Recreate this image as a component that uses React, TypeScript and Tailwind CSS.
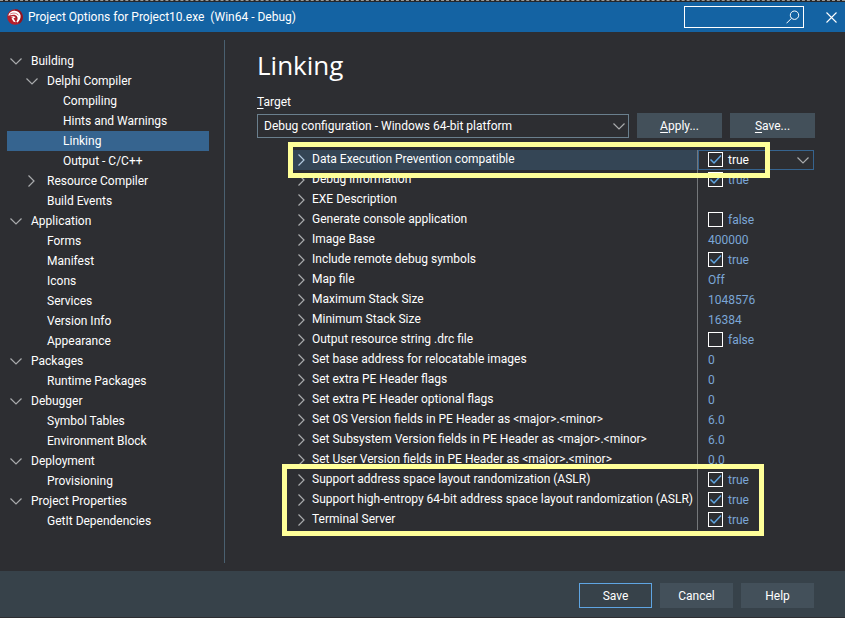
import { useState } from 'react';

type TreeItem = {
  label: string;
  level: 0 | 1 | 2;
  state?: 'open' | 'closed';
};

type Option = {
  name: string;
  value?: string | boolean;
};

const tree: TreeItem[] = [
  { label: 'Building', level: 0, state: 'open' },
  { label: 'Delphi Compiler', level: 1, state: 'open' },
  { label: 'Compiling', level: 2 },
  { label: 'Hints and Warnings', level: 2 },
  { label: 'Linking', level: 2 },
  { label: 'Output - C/C++', level: 2 },
  { label: 'Resource Compiler', level: 1, state: 'closed' },
  { label: 'Build Events', level: 1 },
  { label: 'Application', level: 0, state: 'open' },
  { label: 'Forms', level: 1 },
  { label: 'Manifest', level: 1 },
  { label: 'Icons', level: 1 },
  { label: 'Services', level: 1 },
  { label: 'Version Info', level: 1 },
  { label: 'Appearance', level: 1 },
  { label: 'Packages', level: 0, state: 'open' },
  { label: 'Runtime Packages', level: 1 },
  { label: 'Debugger', level: 0, state: 'open' },
  { label: 'Symbol Tables', level: 1 },
  { label: 'Environment Block', level: 1 },
  { label: 'Deployment', level: 0, state: 'open' },
  { label: 'Provisioning', level: 1 },
  { label: 'Project Properties', level: 0, state: 'open' },
  { label: 'GetIt Dependencies', level: 1 },
];

const options: Option[] = [
  { name: 'Data Execution Prevention compatible', value: true },
  { name: 'Debug information', value: true },
  { name: 'EXE Description' },
  { name: 'Generate console application', value: false },
  { name: 'Image Base', value: '400000' },
  { name: 'Include remote debug symbols', value: true },
  { name: 'Map file', value: 'Off' },
  { name: 'Maximum Stack Size', value: '1048576' },
  { name: 'Minimum Stack Size', value: '16384' },
  { name: 'Output resource string .drc file', value: false },
  { name: 'Set base address for relocatable images', value: '0' },
  { name: 'Set extra PE Header flags', value: '0' },
  { name: 'Set extra PE Header optional flags', value: '0' },
  { name: 'Set OS Version fields in PE Header as <major>.<minor>', value: '6.0' },
  { name: 'Set Subsystem Version fields in PE Header as <major>.<minor>', value: '6.0' },
  { name: 'Set User Version fields in PE Header as <major>.<minor>', value: '0.0' },
  { name: 'Support address space layout randomization (ASLR)', value: true },
  { name: 'Support high-entropy 64-bit address space layout randomization (ASLR)', value: true },
  { name: 'Terminal Server', value: true },
];

const indent = ['pl-0', 'pl-4', 'pl-8'];

function ChevronDown() {
  return (
    <svg width="12" height="7" viewBox="0 0 12 7" fill="none" stroke="currentColor" strokeWidth="1.2" aria-hidden="true">
      <path d="M.5 .5 6 6 11.5 .5" />
    </svg>
  );
}

function ChevronRight() {
  return (
    <svg width="7" height="12" viewBox="0 0 7 12" fill="none" stroke="currentColor" strokeWidth="1.2" aria-hidden="true">
      <path d="M.5 .5 6 6 .5 11.5" />
    </svg>
  );
}

function HelmetLogo() {
  return (
    <svg width="16" height="16" viewBox="0 0 16 16" aria-hidden="true">
      <circle cx="8" cy="8" r="7.8" fill="#b5202c" />
      <path d="M8 .2A7.8 7.8 0 0 1 12 14.700L9 8Z" fill="#8f1521" />
      <path
        d="M1.200 6.800C2 3.400 4.800 1.700 7.800 1.800c3.200.1 5.500 2.100 5.800 4.800.2 2.600-.9 5-2.900 6.800l-1.300-.6c1.200-1.900 1.500-3.700.7-5C9 6 7.200 5.500 5.300 5.900c-1.500.2-2.900.5-4.100.9Z"
        fill="#fff"
      />
      <path d="M3 5.200C5.600 3.500 9.600 3.600 11.600 6.400" fill="none" stroke="#b5202c" strokeWidth=".6" />
      <path d="M3.200 8c2-1.100 4.300-.9 5.300.4l-2 .8 2.300 4-2.200-.5-2.100-3.200 1.500-.9c-.8-.5-1.800-.7-2.800-.6Z" fill="#fff" />
    </svg>
  );
}

function OptionValue({ option, active }: { option: Option; active: boolean }) {
  const [checked, setChecked] = useState(option.value === true);
  if (option.value === undefined) return null;
  if (typeof option.value === 'string') return <span>{option.value}</span>;
  return (
    <label className="flex items-start gap-[5px]">
      <span className="mt-[2px] grid size-[15px]">
        <input
          type="checkbox"
          aria-label={option.name}
          checked={checked}
          onChange={(e) => setChecked(e.target.checked)}
          className="col-start-1 row-start-1 size-[15px] appearance-none border border-white"
        />
        {checked && (
          <svg viewBox="0 0 15 15" fill="none" stroke="#5fa5e2" strokeWidth="1.500" className="pointer-events-none col-start-1 row-start-1 size-[15px]" aria-hidden="true">
            <path d="M2.500 7.500 6 11 13 3.500" />
          </svg>
        )}
      </span>
      <span className={active ? 'text-white' : ''}>{String(checked)}</span>
    </label>
  );
}

const button = 'flex items-center justify-center h-[25px] bg-[#43505a] text-white';

export default function App() {
  return (
    <div className="flex min-h-screen flex-col bg-[#2d2e32] font-['Roboto','Open_Sans',sans-serif] text-[12px] leading-5 text-white">
      <div className="h-[2px] border-t border-dashed border-[#9a9a98] bg-[#26272a]" />
      <header className="flex h-[30px] items-center bg-[#1463a3] pr-1 pl-[7px]">
        <HelmetLogo />
        <h1 className="ml-[5px] flex-1 whitespace-pre">{'Project Options for Project10.exe  (Win64 - Debug)'}</h1>
        <div className="flex h-[22px] w-[120px] items-center border border-white pr-[3px]">
          <input type="text" aria-label="Search options" className="min-w-0 flex-1 bg-transparent px-1 outline-none" />
          <svg width="14" height="14" viewBox="0 0 14 14" fill="none" stroke="#fff" strokeWidth="1" aria-hidden="true">
            <circle cx="8.500" cy="5.200" r="4.200" />
            <path d="M5.500 8.300.5 13.300" />
          </svg>
        </div>
        <button type="button" aria-label="Close" className="ml-[17px] flex h-5 w-5 items-center justify-center">
          <svg width="11" height="11" viewBox="0 0 11 11" stroke="#fff" strokeWidth="1.100" aria-hidden="true">
            <path d="M.5.5l10 10M10.500.5l-10 10" />
          </svg>
        </button>
      </header>

      <div className="flex flex-1 pt-2 pb-2">
        <nav aria-label="Option pages" className="w-[225px] shrink-0 border-r border-[#4a6070] pt-[11px] pr-[15px] pl-[7px]">
          <ul>
            {tree.map((item) => (
              <li key={item.label}>
                <a
                  href="#"
                  aria-current={item.label === 'Linking' ? 'page' : undefined}
                  className={`flex h-5 items-center ${indent[item.level]} ${item.label === 'Linking' ? 'bg-[#36648f]' : ''}`}
                >
                  <span className="flex w-6 shrink-0 pl-[3px] text-[#a9abad]">
                    {item.state === 'open' && <ChevronDown />}
                    {item.state === 'closed' && <span className="pl-[2px]"><ChevronRight /></span>}
                  </span>
                  {item.label}
                </a>
              </li>
            ))}
          </ul>
        </nav>

        <main className="min-w-0 flex-1 pr-[30px] pl-8">
          <h2 className="pt-[5px] font-['Open_Sans',sans-serif] text-[26px] leading-10">Linking</h2>
          <label htmlFor="target" className="mt-[7px] block">
            <span className="underline underline-offset-2">T</span>arget
          </label>
          <div className="mt-px flex items-start gap-2">
            <div className="relative mt-px min-w-0 flex-1">
              <select id="target" className="block h-6 w-full appearance-none border border-[#6a7f8d] bg-[#2d2e32] pl-[6px] text-white">
                <option>Debug configuration - Windows 64-bit platform</option>
              </select>
              <span className="pointer-events-none absolute inset-y-0 right-1 flex items-center text-[#a9abad]">
                <ChevronDown />
              </span>
            </div>
            <button type="button" className={`${button} w-[85px]`}>
              <span className="underline underline-offset-2">A</span>pply...
            </button>
            <button type="button" className={`${button} w-[85px]`}>
              <span className="underline underline-offset-2">S</span>ave...
            </button>
          </div>

          <div className="relative mt-3 mr-px ml-[36px]">
            <table className="w-full table-fixed border-collapse">
              <colgroup>
                <col />
                <col className="w-[117px]" />
              </colgroup>
              <tbody>
                {options.map((option, i) => (
                  <tr key={option.name} className="h-5">
                    <th scope="row" className={`p-0 text-left font-normal ${i === 0 ? 'bg-[#344555]' : ''}`}>
                      <span className="flex h-5 items-center whitespace-nowrap">
                        <button type="button" aria-label={`Expand ${option.name}`} className={`flex w-[19px] shrink-0 pl-[5px] ${i === 0 ? 'text-[#b4cbe0]' : 'text-[#a9abad]'}`}>
                          <ChevronRight />
                        </button>
                        <span className="pb-[2px] leading-[18px]">{option.name}</span>
                      </span>
                    </th>
                    <td className="p-0">
                      <div className="flex h-5 border-l border-[#74777a] text-[#7ba6d6]">
                        <div className={`flex flex-1 items-center justify-between pr-1 ${i === 0 ? 'border border-[#36648f] pl-[9px]' : 'pl-[10px]'}`}>
                          <OptionValue option={option} active={i === 0} />
                          {i === 0 && (
                            <button type="button" aria-label="Choose value" className="text-[#a9abad]">
                              <ChevronDown />
                            </button>
                          )}
                        </div>
                      </div>
                    </td>
                  </tr>
                ))}
              </tbody>
            </table>
            <div className="pointer-events-none absolute -top-2 right-11 -left-[5px] h-9 border-[5px] border-[#ffff99]" />
            <div className="pointer-events-none absolute right-[50px] -bottom-[6px] -left-[11px] h-[72px] border-[5px] border-[#ffff99]" />
          </div>
        </main>
      </div>

      <footer className="flex h-[47px] items-start justify-end gap-2 border-b border-[#2d2e32] bg-[#37424a] pt-3 pr-[31px]">
        <button type="button" className="h-[25px] w-[73px] border border-[#5fa5e2]">Save</button>
        <button type="button" className={`${button} w-[73px]`}>Cancel</button>
        <button type="button" className={`${button} w-[73px]`}>Help</button>
      </footer>
    </div>
  );
}
